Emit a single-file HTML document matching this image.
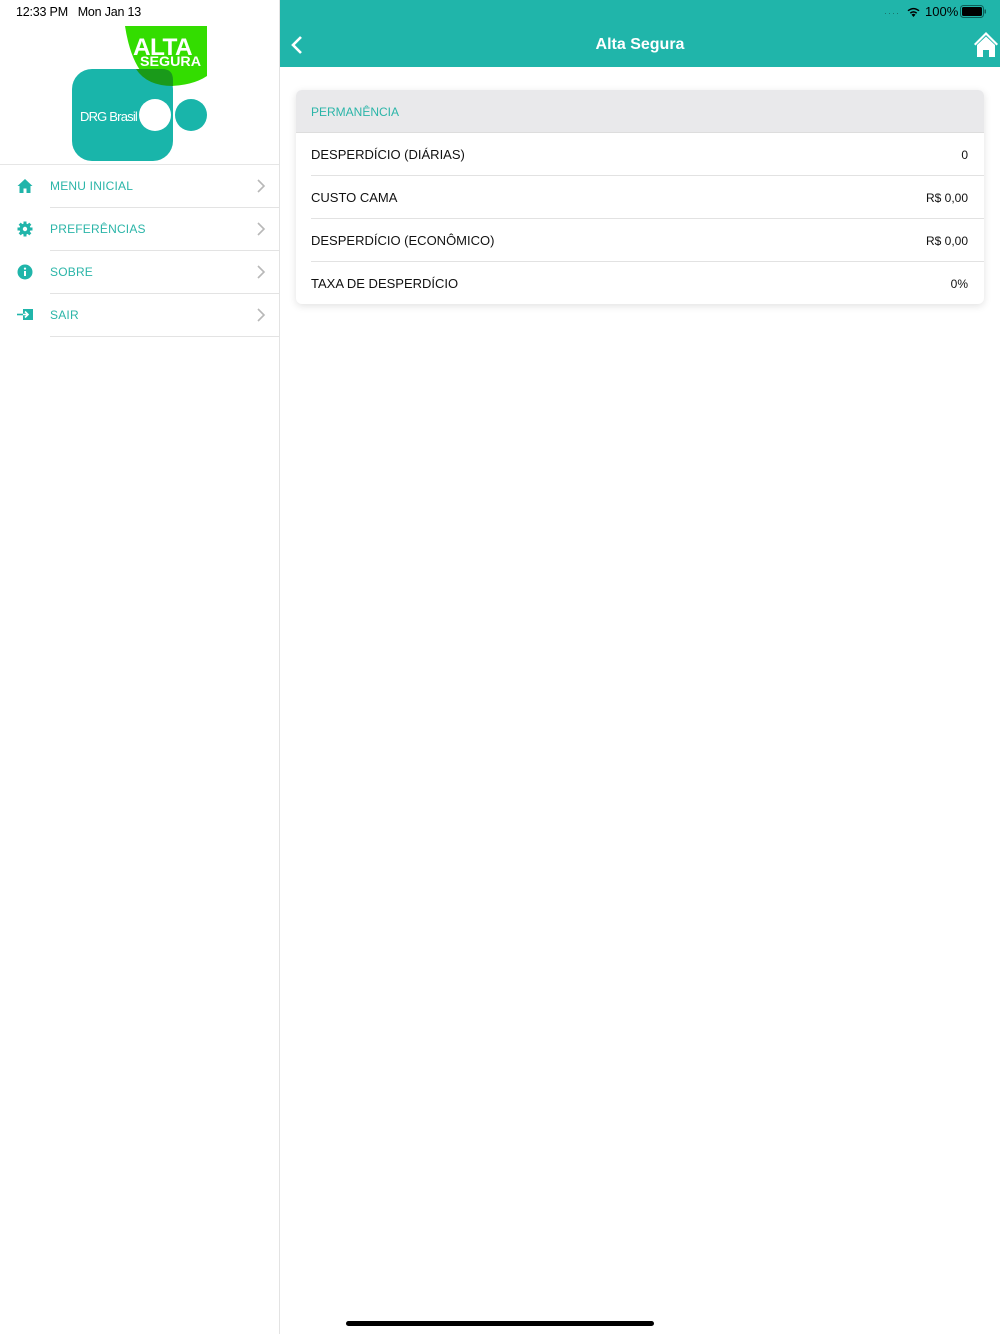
<!DOCTYPE html>
<html><head><meta charset="utf-8"><style>
*{margin:0;padding:0;box-sizing:border-box}
body{width:1000px;height:1334px;position:relative;background:#fff;font-family:"Liberation Sans",sans-serif;overflow:hidden}
.side{position:absolute;left:0;top:0;width:280px;height:1334px;background:#fff;border-right:1px solid #e3e3e3}
.time{position:absolute;left:16px;top:5px;font-size:12.5px;color:#000;letter-spacing:-.2px}
.menu{position:absolute;left:0;top:164px;width:279px;border-top:1px solid #e6e6e6}
.item{position:relative;height:43px}
.item:after{content:"";position:absolute;left:50px;right:0;bottom:0;height:1px;background:#e3e3e3}
.item .lbl{position:absolute;left:50px;top:14px;font-size:12px;color:#2bb5a8;letter-spacing:.2px}
.item svg.ic{position:absolute;left:17px;top:13px}
.item .chev{position:absolute;left:256px;top:14px}
.top{position:absolute;left:280px;top:0;width:720px;height:67px;background:#20b5aa}
.title{position:absolute;left:0;width:720px;top:36px;text-align:center;color:#fff;font-size:16px;font-weight:bold}
.card{position:absolute;left:296px;top:90px;width:688px;height:214px;background:#fff;border-radius:6px;box-shadow:0 2px 8px rgba(0,0,0,.12);overflow:hidden}
.ch{height:43px;background:#e9e9eb;border-bottom:1px solid #ddd;font-size:12px;color:#2bb5a8;padding:15px 0 0 15px}
.row{position:relative;height:43px}
.row:not(:last-child):after{content:"";position:absolute;left:15px;right:0;bottom:0;height:1px;background:#e2e2e2}
.row .k{position:absolute;left:15px;top:14px;font-size:13px;color:#111}
.row .v{position:absolute;right:16px;top:15px;font-size:12px;color:#111}
.bar{position:absolute;left:346px;top:1321px;width:308px;height:5px;border-radius:3px;background:#000}
</style></head><body>
<div class="side">
 <div class="time">12:33 PM &nbsp;&nbsp;Mon Jan 13</div>
 <svg style="position:absolute;left:72px;top:26px" width="140" height="136" viewBox="0 0 140 136">
  <path d="M53 0 H135 V50 Q120 60 95 60 Q62 58 53 0Z" fill="#33dd00"/>
  <rect x="0" y="43" width="101" height="92" rx="20" fill="#19b5aa"/>
  <path d="M64 43 H90 Q101 43 101 54 V60 Q75 60 64 43Z" fill="#1a9a1a"/>
  <circle cx="83" cy="89" r="16" fill="#fff"/>
  <circle cx="119" cy="89" r="16" fill="#19b5aa"/>
  <text x="8" y="95" font-family="Liberation Sans" font-size="13" fill="#fff" letter-spacing="-.8">DRG Brasil</text>
  <text x="61" y="29" font-family="Liberation Sans" font-weight="bold" font-size="24" fill="#fff" letter-spacing="-.6" textLength="59" lengthAdjust="spacingAndGlyphs">ALTA</text>
  <text x="68" y="40" font-family="Liberation Sans" font-weight="bold" font-size="13.5" fill="#fff" textLength="61" lengthAdjust="spacingAndGlyphs">SEGURA</text>
 </svg>
 <div class="menu">
  <div class="item"><svg class="ic" width="16" height="16" viewBox="0 0 16 16"><path d="M8 1L0.5 8H2.5V15H6.5V10.5H9.5V15H13.5V8H15.5Z" fill="#20b5aa"/></svg><span class="lbl">MENU INICIAL</span><svg class="chev" width="10" height="14"><path d="M2 1L8 7L2 13" stroke="#b8b8b8" stroke-width="1.6" fill="none"/></svg></div>
  <div class="item"><svg class="ic" width="16" height="16" viewBox="0 0 16 16"><circle cx="8" cy="8" r="5.5" fill="#20b5aa"/><g stroke="#20b5aa" stroke-width="3"><path d="M8 0.5V15.5M0.5 8H15.5M2.7 2.7L13.3 13.3M13.3 2.7L2.7 13.3"/></g><circle cx="8" cy="8" r="2.2" fill="#fff"/></svg><span class="lbl">PREFERÊNCIAS</span><svg class="chev" width="10" height="14"><path d="M2 1L8 7L2 13" stroke="#b8b8b8" stroke-width="1.6" fill="none"/></svg></div>
  <div class="item"><svg class="ic" width="16" height="16" viewBox="0 0 16 16"><circle cx="8" cy="8" r="7.5" fill="#20b5aa"/><rect x="7" y="7" width="2" height="5" fill="#fff"/><circle cx="8" cy="4.6" r="1.1" fill="#fff"/></svg><span class="lbl">SOBRE</span><svg class="chev" width="10" height="14"><path d="M2 1L8 7L2 13" stroke="#b8b8b8" stroke-width="1.6" fill="none"/></svg></div>
  <div class="item"><svg class="ic" width="17" height="16" viewBox="0 0 17 16"><rect x="6" y="2" width="10" height="11" fill="#20b5aa"/><path d="M0 7.5H11M8 4.5L11 7.5L8 10.5" stroke="#fff" stroke-width="1.6" fill="none"/><path d="M0 7.5H6" stroke="#20b5aa" stroke-width="1.6"/></svg><span class="lbl">SAIR</span><svg class="chev" width="10" height="14"><path d="M2 1L8 7L2 13" stroke="#b8b8b8" stroke-width="1.6" fill="none"/></svg></div>
 </div>
</div>
<div class="top">
 <span style="position:absolute;left:604px;top:8px;color:#1a6d66;font-size:9px;letter-spacing:1px">····</span>
 <svg style="position:absolute;left:626px;top:6px" width="15" height="12" viewBox="0 0 15 12"><path d="M7.5 11L5.5 8.6Q7.5 7 9.5 8.6Z M3.8 6.6Q7.5 3.6 11.2 6.6L10.2 7.7Q7.5 5.6 4.8 7.7Z M1.5 4.3Q7.5 -0.5 13.5 4.3L12.5 5.3Q7.5 1.4 2.5 5.3Z" fill="#000"/></svg>
 <span style="position:absolute;left:645px;top:4px;font-size:13px;color:#000">100%</span>
 <svg style="position:absolute;left:680px;top:5px" width="27" height="13"><rect x=".5" y=".5" width="23" height="12" rx="3" fill="none" stroke="#0d5f58"/><rect x="2" y="2" width="20" height="9" rx="1.5" fill="#000"/><rect x="24.5" y="4.5" width="1.5" height="4" fill="#0d5f58"/></svg>
 <svg style="position:absolute;left:10px;top:35px" width="14" height="20"><path d="M11 2L3 10L11 18" stroke="#fff" stroke-width="2.6" fill="none"/></svg>
 <div class="title">Alta Segura</div>
 <svg style="position:absolute;left:693px;top:31px" width="26" height="27" viewBox="0 0 26 27"><path d="M13 1L1 13L2.5 14.5L13 4L23.5 14.5L25 13Z" fill="#fff"/><path d="M4 14L13 5.5L22 14V26H16V19H10V26H4Z" fill="#fff"/></svg>
</div>
<div class="card">
 <div class="ch">PERMANÊNCIA</div>
 <div class="row"><span class="k">DESPERDÍCIO (DIÁRIAS)</span><span class="v">0</span></div>
 <div class="row"><span class="k">CUSTO CAMA</span><span class="v">R$ 0,00</span></div>
 <div class="row"><span class="k">DESPERDÍCIO (ECONÔMICO)</span><span class="v">R$ 0,00</span></div>
 <div class="row"><span class="k">TAXA DE DESPERDÍCIO</span><span class="v">0%</span></div>
</div>
<div class="bar"></div>
</body></html>
